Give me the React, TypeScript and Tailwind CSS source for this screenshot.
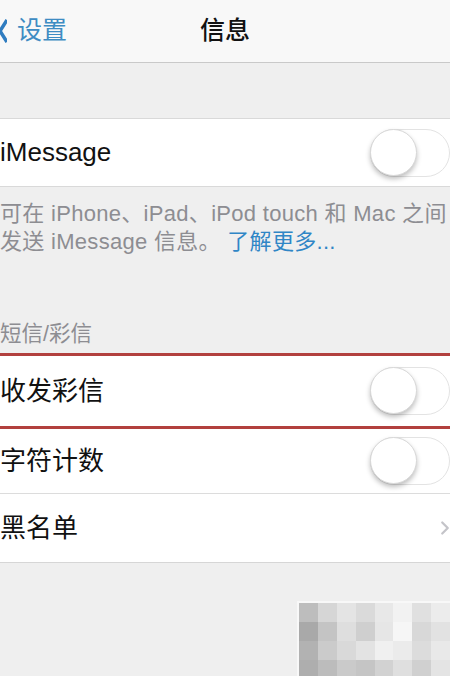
import { ChevronRight } from "lucide-react";

const font = { fontFamily: '"Liberation Sans", "Noto Sans CJK SC", sans-serif' };

function Toggle() {
  return (
    <div className="relative h-[48px] w-[80px] shrink-0 rounded-full border-[1.5px] border-[#e3e3e3] bg-white">
      <div className="absolute -left-[1px] -top-[1px] h-[47px] w-[47px] rounded-full border border-[#d8d8d8] bg-white shadow-[0_3px_5px_rgba(0,0,0,0.25)]" />
    </div>
  );
}

const mosaic = [
  ["#bdbdbd", "#d6d6d6", "#e4e4e4", "#dadada", "#e8e8e8", "#f2f2f2", "#e0e0e0", "#ececec"],
  ["#a9a9a9", "#c4c4c4", "#dedede", "#cfcfcf", "#e6e6e6", "#f6f6f6", "#d8d8d8", "#e2e2e2"],
  ["#b2b2b2", "#cbcbcb", "#d9d9d9", "#e3e3e3", "#f0f0f0", "#ebebeb", "#dcdcdc", "#e9e9e9"],
  ["#aeaeae", "#bcbcbc", "#cacaca", "#c5c5c5", "#d2d2d2", "#dfdfdf", "#d0d0d0", "#e4e4e4"],
];

export default function App() {
  return (
    <div className="h-[676px] w-[450px] overflow-hidden bg-[#efefef]" style={font}>
      <header className="relative flex h-[63px] items-center justify-center border-b border-[#c9c9c9] bg-[#f8f8f8]">
        <div className="absolute left-0 top-0 flex h-full items-center">
          <svg width="8" height="26" viewBox="0 0 8 26" className="-ml-[1px] mr-[10px]">
            <path d="M8 2 L1 13 L8 24" fill="none" stroke="#2f7cc0" strokeWidth="3.5" />
          </svg>
          <span className="text-[25px] text-[#3e8cc3]">设置</span>
        </div>
        <h1 className="text-[25px] font-medium text-[#111]">信息</h1>
      </header>

      <div className="h-[55px]" />

      <div className="flex h-[69px] items-center justify-between border-y border-[#d9d9d9] bg-white">
        <span className="text-[26px] text-[#111]">iMessage</span>
        <Toggle />
      </div>

      <p className="whitespace-nowrap pt-[13px] text-[22px] leading-[28px] tracking-[0.3px] text-[#8d8d92]">
        可在 iPhone、iPad、iPod touch 和 Mac 之间
        <br />
        发送 iMessage 信息。 <span className="text-[#2f86c6]">了解更多...</span>
      </p>

      <div className="pt-[64px] pb-[5px] text-[21.5px] leading-[28px] text-[#8d8d92]">短信/彩信</div>

      <div className="flex h-[76px] items-center justify-between border-y-[3px] border-[#b2403e] bg-white">
        <span className="text-[26px] text-[#111]">收发彩信</span>
        <Toggle />
      </div>

      <div className="flex h-[65px] items-center justify-between border-b border-[#dcdcdc] bg-white">
        <span className="text-[26px] text-[#111]">字符计数</span>
        <Toggle />
      </div>

      <div className="flex h-[69px] items-center justify-between border-b border-[#d6d6d6] bg-white">
        <span className="text-[26px] text-[#111]">黑名单</span>
        <ChevronRight className="-mr-[6px] h-[22px] w-[22px] text-[#c4c4c9]" strokeWidth={2.5} />
      </div>

      <div className="flex justify-end pt-[38px]">
        <div className="grid w-[153px] grid-cols-8 border-l-2 border-t-2 border-[#f8f8f8]">
          {mosaic.flat().map((c, i) => (
            <div key={i} className="h-[19px]" style={{ backgroundColor: c }} />
          ))}
        </div>
      </div>
    </div>
  );
}
